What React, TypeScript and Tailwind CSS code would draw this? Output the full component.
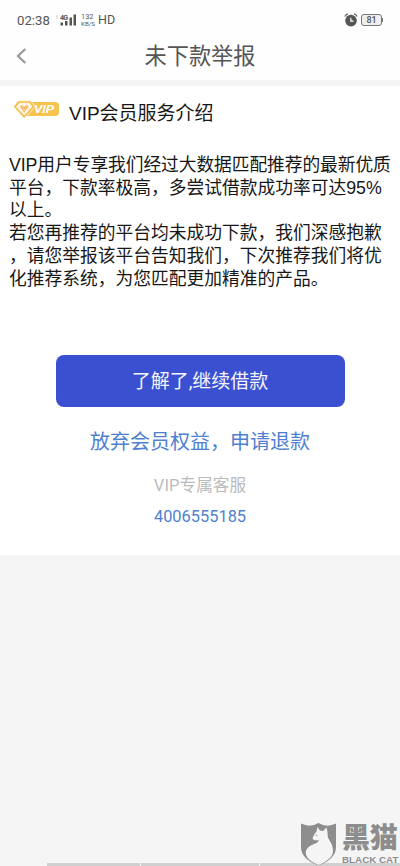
import React from 'react';

const introLines = [
  'VIP用户专享我们经过大数据匹配推荐的最新优质',
  '平台，下款率极高，多尝试借款成功率可达95%',
  '以上。',
  '若您再推荐的平台均未成功下款，我们深感抱歉',
  '，请您举报该平台告知我们，下次推荐我们将优',
  '化推荐系统，为您匹配更加精准的产品。',
];

function SignalIcon() {
  return (
    <svg className="ml-[5px] h-[14px] w-[22px]" viewBox="0 0 22 14" fill="#555">
      <path d="M1 3.5l1-1.5 1 1.5zM1 4.5h2l-1 1.5z" opacity=".4" />
      <rect x="5.5" y="9.5" width="2.5" height="3" />
      <rect x="10" y="8" width="2.5" height="4.5" />
      <rect x="14.5" y="4.5" width="2.5" height="8" />
      <rect x="18.5" y="1.5" width="2.5" height="11" />
      <text x="5" y="6.5" fontSize="7" fontWeight="700" fontFamily="Roboto, sans-serif" textLength="8">4G</text>
    </svg>
  );
}

function AlarmIcon() {
  return (
    <svg className="h-[14px] w-[14px]" viewBox="0 0 14 14" fill="none">
      <circle cx="7" cy="7.6" r="5.8" fill="#555" />
      <path d="M.9 3.6Q1.8 1.5 4 .9M10 .9q2.2.6 3.1 2.7" stroke="#666" strokeWidth="1.3" />
      <path d="M6.8 4.7v3.4h2.7" stroke="#fff" strokeWidth="1.2" />
    </svg>
  );
}

function StatusBar() {
  return (
    <div className="flex h-10 items-center pr-[17px] pl-[17px] text-[#555]">
      <span className="w-[33px] pt-px text-[13.2px] leading-none whitespace-nowrap">02:38</span>
      <SignalIcon />
      <div className="ml-[4px] flex w-[16px] flex-col gap-px whitespace-nowrap">
        <div className="h-[7px] text-[7.4px] leading-[7px]">132</div>
        <div className="h-[6px] text-[6.2px] leading-[6px]">KB/S</div>
      </div>
      <span className="ml-px pt-px text-[12.5px] leading-none">HD</span>
      <div className="ml-auto flex items-center gap-[3px]">
        <AlarmIcon />
        <div className="flex items-center">
          <div className="flex h-[12px] w-[21px] items-center justify-center rounded-[3px] border border-[#777] bg-[#eee] text-[9px] leading-none font-medium">
            81
          </div>
          <div className="h-1 w-px bg-[#777]" />
        </div>
      </div>
    </div>
  );
}

function VipBadge() {
  return (
    <svg className="mb-[9px] h-[20px] w-[47px]" viewBox="0 0 47 20">
      <path d="M12 2h30q4 0 4 3.500v7q0 3.500-4 3.500H14z" fill="#f7c34f" />
      <path d="M5.200.7h12.300l4.700 6L11.200 18.500.4 6.700z" fill="#f6c050" stroke="#fff" strokeWidth=".7" />
      <path d="M6.600 2.800h9.600l3.100 4-8.100 8.600L3.100 6.800z" fill="#fff4dc" />
      <path d="M7 6.200l4.200 6.500 4.200-6.500-1.800-1-2.400 1.500-2.400-1.500z" fill="#f2ad58" />
      <path d="M9 5.500l2.200 5.500 2.200-5.500" fill="none" stroke="#fff4dc" strokeWidth=".6" />
      <text x="21" y="12.700" fontSize="10.500" fontWeight="700" fontStyle="italic" fontFamily="Liberation Sans, sans-serif" fill="#fff" textLength="20" lengthAdjust="spacingAndGlyphs">VIP</text>
    </svg>
  );
}

function BlackCatMark() {
  return (
    <div className="absolute right-0 bottom-0 flex h-[46px] w-[100px] text-[#8d8d8d]">
      <svg className="h-[46px] w-[38px] shrink-0" viewBox="0 0 38 46">
        <path d="M1 3.500Q10 8 18.500 3 27 8 36 3.500V27q0 12-17.500 18.500Q1 39 1 27z" fill="#8d8d8d" />
        <path d="M17.500 7L20 10.500 23 11l3.500-3.500q1.500 5 1.300 9C28 20 33 23 33 31c0 6-6 10.500-14.500 14C12 42 6.500 39 5.800 33.500 5.300 28.500 10 25.500 14 24q4.500-1.500 4.700-4-3 .8-5.200-.2L12.500 18l2.300-4.500 1.700-2z" fill="#f5f5f5" />
        <path d="M15.500 15l2 .7" stroke="#8d8d8d" strokeWidth=".8" />
      </svg>
      <div className="ml-[4px] w-[58px]">
        <div className="mt-[3px] text-[28px] leading-[32px] font-black tracking-[-0.2px] whitespace-nowrap">黑猫</div>
        <div className="-mt-px font-['Liberation_Sans',sans-serif] text-[9.8px] leading-[11px] font-bold whitespace-nowrap">BLACK CAT</div>
      </div>
    </div>
  );
}

export default function App() {
  return (
    <div className="relative flex h-[866px] w-[400px] flex-col overflow-hidden bg-[#f5f5f5] font-[Roboto,'Noto_Sans_CJK_SC',sans-serif]">
      <header className="h-[80px] bg-[#fefefe]">
        <StatusBar />
        <div className="flex h-[32px] items-center">
          <svg className="ml-[16px] h-[16px] w-[11px]" viewBox="0 0 11 16" fill="none" stroke="#999" strokeWidth="2.2">
            <path d="M9.3 1L2 8l7.3 7" />
          </svg>
          <h1 className="mr-[27px] flex-1 text-center text-[22.2px] leading-[32px] text-[#555]">未下款举报</h1>
        </div>
      </header>

      <main className="mt-[6px] h-[469px] bg-white">
        <div className="flex h-[56px] items-center pl-[13px] font-['Liberation_Sans','Noto_Sans_CJK_SC',sans-serif]">
          <VipBadge />
          <h2 className="ml-[9px] text-[19px] leading-[28px] text-[#171717]">VIP会员服务介绍</h2>
        </div>

        <div className="mt-[12px] pl-[9px] font-['Liberation_Sans','Noto_Sans_CJK_SC',sans-serif] text-[17.75px] leading-[22.7px] text-[#171717]">
          {introLines.map((line) => (
            <p key={line} className="whitespace-nowrap first:tracking-[-0.08px]">{line}</p>
          ))}
        </div>

        <div className="mt-[65px] flex flex-col items-center">
          <button className="h-[52px] w-[289px] rounded-lg bg-[#3a50d0] pt-[2px] text-[19px] text-[#f4f6ff]">
            了解了,继续借款
          </button>
          <a className="mt-[20px] text-[20px] leading-[30px] text-[#4f7fd0]">放弃会员权益，申请退款</a>
          <p className="mt-[17px] text-[16.7px] leading-[24px] text-[#bbb]">VIP专属客服</p>
          <a className="mt-[7px] text-[16.4px] leading-[24px] text-[#4f7fd0]">4006555185</a>
        </div>
      </main>

      <div className="mt-auto ml-[47px] flex h-[3px] gap-px">
        <div className="w-[93px] bg-[#d0d0d0]" />
        <div className="w-[118px] bg-[#d0d0d0]" />
        <div className="flex-1 bg-[#d0d0d0]" />
      </div>
      <BlackCatMark />
    </div>
  );
}
